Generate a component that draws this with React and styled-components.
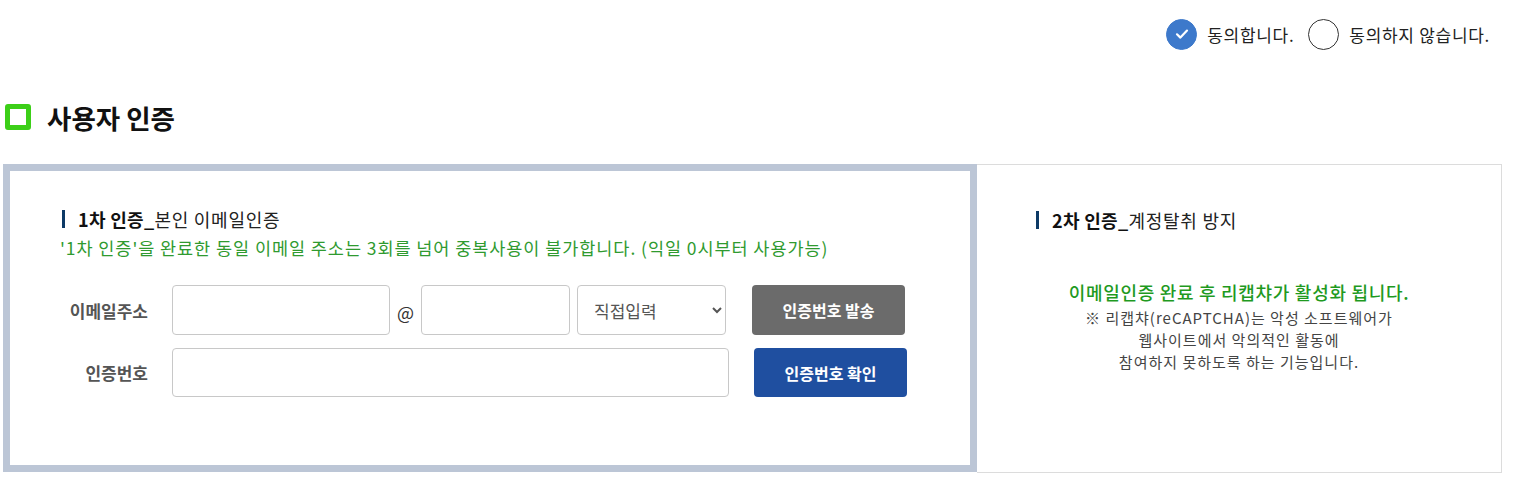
import React from 'react'
import styled, { createGlobalStyle } from 'styled-components'

const GlobalStyle = createGlobalStyle`
  body {
    margin: 0;
    background: #fff;
    font-family: 'Noto Sans CJK KR', 'Noto Sans', sans-serif;
    color: #222;
  }
  * {
    box-sizing: border-box;
  }
`

const Page = styled.div`
  width: 1527px;
  padding: 0 25px 0 3px;
`

const AgreeRow = styled.div`
  display: flex;
  justify-content: flex-end;
  align-items: center;
  height: 68px;
  padding-right: 12px;
  gap: 14px;
`

const AgreeOption = styled.label`
  display: flex;
  align-items: center;
  gap: 10px;
  font-size: 17px;
  color: #222;
  letter-spacing: 0.7px;
`

const Radio = styled.span`
  width: 31px;
  height: 31px;
  border-radius: 50%;
  display: flex;
  align-items: center;
  justify-content: center;
  background: ${(p) => (p.checked ? '#3d79cb' : '#fff')};
  border: 1px solid ${(p) => (p.checked ? '#3d79cb' : '#333')};
`

const SectionTitle = styled.h2`
  display: flex;
  align-items: center;
  gap: 16px;
  margin: 0;
  height: 36px;
  margin-top: 31px;
  padding-left: 2px;
  font-size: 26.5px;
  font-weight: 700;
  color: #111;
`

const GreenSquare = styled.span`
  width: 26px;
  height: 26px;
  border: 5px solid #3ccf18;
  border-radius: 3px;
`

const Panels = styled.div`
  display: flex;
  margin-top: 29px;
`

const LeftPanel = styled.div`
  width: 974px;
  height: 308px;
  border: 7px solid #bcc6d6;
  padding: 35px 0 0 50px;
`

const RightPanel = styled.div`
  flex: 1;
  height: 309px;
  border: 1px solid #dcdcdc;
  border-left: none;
  padding: 42px 0 0 57px;
`

const Heading = styled.div`
  display: flex;
  align-items: center;
  height: 25px;
  font-size: 18px;
  color: #222;
  letter-spacing: 0.75px;
  padding-left: 2px;

  &::before {
    content: '';
    width: 3px;
    height: 18px;
    background: #0d3a66;
    margin-right: 13px;
  }

  b {
    font-weight: 700;
    color: #111;
    letter-spacing: 0.3px;
  }
`

const Note = styled.p`
  margin: 4px 0 0;
  line-height: 25px;
  font-size: 17.5px;
  color: #2f9a2f;
  letter-spacing: 0.93px;
`

const Form = styled.div`
  display: flex;
  flex-direction: column;
  gap: 13px;
  margin-top: 25px;
`

const Row = styled.div`
  display: flex;
  align-items: center;
`

const Label = styled.span`
  width: 88px;
  text-align: right;
  margin-right: 24px;
  font-size: 17px;
  font-weight: 700;
  color: #555;
`

const Input = styled.input`
  width: ${(p) => p.w}px;
  height: ${(p) => p.h || 50}px;
  border: 1px solid #c8c8c8;
  border-radius: 4px;
  padding: 0 14px;
  font-size: 16px;
  font-family: inherit;
  outline: none;
`

const At = styled.span`
  width: 31px;
  text-align: center;
  font-size: 18px;
  color: #333;
  padding-top: 4px;
`

const Select = styled.select`
  width: 149px;
  height: 50px;
  margin-left: 7px;
  border: 1px solid #c8c8c8;
  border-radius: 4px;
  padding: 0 10px 0 12px;
  font-size: 17px;
  font-family: inherit;
  color: #555;
  background: #fff;
`

const Button = styled.button`
  width: 153px;
  height: ${(p) => p.h || 50}px;
  margin-left: ${(p) => p.ml}px;
  border: none;
  border-radius: 4px;
  background: ${(p) => p.bg};
  color: #fff;
  font-size: 16px;
  font-weight: 700;
  font-family: inherit;
`

const Notice = styled.div`
  margin-top: 47px;
  margin-left: -57px;
  text-align: center;
`

const NoticeMain = styled.p`
  margin: 0;
  font-size: 18px;
  line-height: 26px;
  font-weight: 500;
  color: #1f9a1f;
  letter-spacing: 0.7px;
`

const NoticeSub = styled.p`
  margin: 2px 0 0;
  font-size: 15px;
  line-height: 22px;
  color: #444;
  letter-spacing: 1px;
`

const Check = () => (
  <svg width='18' height='18' viewBox='0 0 18 18'>
    <path d='M4 9.3l3.4 3.3 6.6-7' fill='none' stroke='#fff' strokeWidth='2.2' strokeLinecap='round' strokeLinejoin='round' />
  </svg>
)

export default function App() {
  return (
    <Page>
      <GlobalStyle />
      <AgreeRow>
        <AgreeOption>
          <Radio checked>
            <Check />
          </Radio>
          동의합니다.
        </AgreeOption>
        <AgreeOption>
          <Radio />
          동의하지 않습니다.
        </AgreeOption>
      </AgreeRow>

      <SectionTitle>
        <GreenSquare />
        사용자 인증
      </SectionTitle>

      <Panels>
        <LeftPanel>
          <Heading>
            <b>1차 인증_</b>본인 이메일인증
          </Heading>
          <Note>'1차 인증'을 완료한 동일 이메일 주소는 3회를 넘어 중복사용이 불가합니다. (익일 0시부터 사용가능)</Note>
          <Form>
            <Row>
              <Label>이메일주소</Label>
              <Input w={218} />
              <At>@</At>
              <Input w={149} />
              <Select defaultValue='direct'>
                <option value='direct'>직접입력</option>
                <option value='naver'>naver.com</option>
                <option value='gmail'>gmail.com</option>
              </Select>
              <Button bg='#6b6b6b' ml={26}>인증번호 발송</Button>
            </Row>
            <Row>
              <Label>인증번호</Label>
              <Input w={557} h={49} />
              <Button bg='#1f4fa0' ml={25} h={49}>인증번호 확인</Button>
            </Row>
          </Form>
        </LeftPanel>

        <RightPanel>
          <Heading>
            <b>2차 인증_</b>계정탈취 방지
          </Heading>
          <Notice>
            <NoticeMain>이메일인증 완료 후 리캡챠가 활성화 됩니다.</NoticeMain>
            <NoticeSub>
              ※ 리캡챠(reCAPTCHA)는 악성 소프트웨어가
              <br />
              웹사이트에서 악의적인 활동에
              <br />
              참여하지 못하도록 하는 기능입니다.
            </NoticeSub>
          </Notice>
        </RightPanel>
      </Panels>
    </Page>
  )
}
